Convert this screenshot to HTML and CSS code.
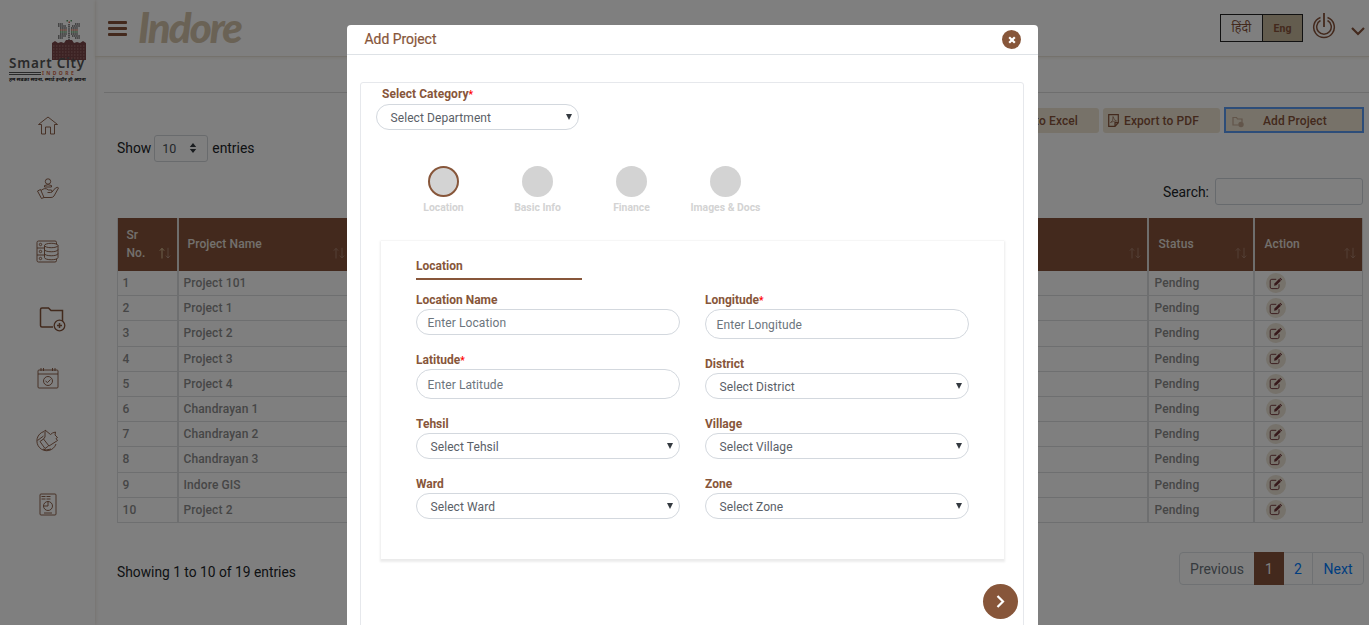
FILE: index.html
```html
<!DOCTYPE html>
<html lang="en">
<head>
<meta charset="utf-8">
<title>Add Project</title>
<link rel="stylesheet" href="styles.css">
</head>
<body>
<svg class="defs" width="0" height="0">
  <symbol id="edit" viewBox="0 0 14 14"><path d="M10.8 7.8v3a1.7 1.7 0 0 1-1.700 1.700H3a1.700 1.700 0 0 1-1.700-1.700V4.200A1.700 1.700 0 0 1 3 2.500h4.800" fill="none" stroke="currentColor" stroke-width="1"/><path d="M5.500 9.500l.4-2.500 5-5 2 2-5 5z" fill="currentColor"/><path d="M11.300 1.600l.8-.8 2 2-.8.8z" fill="currentColor"/></symbol>
  <symbol id="sort" viewBox="0 0 12 12"><path d="M3 11.500V1.500M.8 3.700L3 1.300l2.200 2.400"/><path d="M9 .800v10M6.800 8.600L9 11l2.200-2.400"/></symbol>
  <symbol id="sort-asc" viewBox="0 0 12 12"><path d="M3 11.500V1.500M.8 3.700L3 1.300l2.200 2.400" stroke="#d8c096"/><path d="M9 .800v10M6.800 8.600L9 11l2.200-2.400" opacity=".3"/></symbol>
</svg>
<div class="app">
  <aside class="sidebar">
    <div class="brand">
      <svg class="brand-art" width="36" height="43" viewBox="0 0 36 43">
        <g fill="none" stroke="#666" stroke-width="1.500" stroke-dasharray="1.500 .6">
          <path d="M7 6h5M7 8h8M9 10h7M9 16h7M7 18h8M7 20h5M24 6h5M21 8h8M20 10h7M20 16h7M21 18h8M24 20h5M18 6v16"/>
        </g>
        <g fill="none" stroke-width="1.500" stroke-dasharray="1.500 .6"><path d="M9 12h7M20 12h7" stroke="#c06a50"/><path d="M9 14h7M20 14h7" stroke="#5a9a66"/></g>
        <path d="M15.500 2H17v1.500h-1.500zM19.500 2H21v1.500h-1.500z" fill="#5a9a66"/><path d="M17.500 3.500H19V5h-1.500z" fill="#d06a50"/>
        <path d="M1 25l3-2 3 2 3-1 3 1 2-3h6l2 3 3-1 3 1 3-2 3 2v17H1z" fill="#7a4648"/>
        <g fill="none" stroke="#b58a88" stroke-width=".8" stroke-dasharray="1.500 1.500"><path d="M2 28h32M2 31h32M2 34h32M2 37h32M2 40h32"/></g>
      </svg>
      <div class="brand-name">Smart City</div>
      <div class="brand-sub"><span class="brand-line"></span><span>INDORE</span></div>
      <div class="brand-tag">हम सबका सपना, स्मार्ट इन्दौर हो अपना</div>
    </div>
    <nav class="menu">
      <a><svg width="22" height="22" viewBox="0 0 22 22"><path d="M1.500 9.500L11 2l9.500 7.500H17.500V19H13.500v-7h-5v7h-4V9.500z"/></svg></a>
      <a><svg width="24" height="24" viewBox="0 0 24 24"><circle cx="12" cy="4.500" r="2.700"/><path d="M8.500 10V8.500q3.500-1.500 7 0V10zM1.500 14l3-1.500 3.500 8-2.500 1zM5 13.500q4-3.500 7.500-.5h3q2 2-1 2.500h-3M15.500 15.500l4-4.500q3-1.500 3 0l-4.500 8q-1 1.500-3 1.500H8"/></svg></a>
      <a><svg width="23" height="23" viewBox="0 0 23 23"><rect x="1" y="1" width="19.500" height="21" rx="1.500"/><path d="M1 8h8M1 15h8"/><circle cx="4.500" cy="4.500" r="1.200"/><circle cx="4.500" cy="11.500" r="1.200"/><circle cx="4.500" cy="18.500" r="1.200"/><path class="fill" d="M8.500 5.500v12c0 3 13.500 3 13.500 0v-12"/><ellipse class="fill" cx="15.250" cy="5.500" rx="6.750" ry="2.200"/><path d="M8.500 9.500c0 3 13.500 3 13.500 0M8.500 13.500c0 3 13.500 3 13.500 0"/></svg></a>
      <a class="folder"><svg width="27" height="26" viewBox="0 0 27 26"><path stroke-width="1.500" d="M14 21H3q-1.500 0-1.500-1.500v-16Q1.500 2 3 2h6.500L12 4.500h11.500V15"/><circle cx="20.500" cy="19.500" r="5.300" stroke-width="1.300"/><path stroke-width="1.500" d="M20.500 17v5M18 19.500h5"/></svg></a>
      <a><svg width="22" height="22" viewBox="0 0 22 22"><rect x="1" y="3" width="20" height="18" rx="1"/><path d="M1 7h20M4 1v3M6.500 1v3M15.500 1v3M18 1v3"/><circle cx="11" cy="14" r="4.500"/><path d="M8.500 14l2 1.500 3-3"/></svg></a>
      <a><svg width="23" height="23" viewBox="0 0 23 23"><path d="M8 2.500A9.800 9.800 0 1 0 20 15M1.500 11.500l6-4.500M9 1v7l-1.500 2 5.500 7 8.500-5.500-1.500-2 1.500-1-2.500-2.500.5-3-3 1-2 1.500L9 1M7.500 10L4 12.500l5 7 3.500-2.500M7 20l3 1 5-1"/></svg></a>
      <a class="report"><svg width="18" height="23" viewBox="0 0 18 23"><rect x="1" y="1" width="16" height="21" rx="1"/><circle cx="9" cy="13" r="4.500"/><path d="M9 8.500V13H4.500M5 20h8M2.500 3.500h4M7.500 3.500h4M2.500 6h4M7.500 6h4"/></svg></a>
    </nav>
  </aside>
  <div class="page">
    <header class="topbar">
      <div class="burger"><i></i><i></i><i></i></div>
      <div class="city">Indore</div>
      <div class="lang"><span>हिंदी</span><b>Eng</b></div>
      <svg class="power" width="24" height="28" viewBox="0 0 24 28"><path d="M8.500 5.500A10.300 10.300 0 1 0 15.500 5.500M8.500 8.500A7.300 7.300 0 1 0 15.500 8.500" fill="none" stroke="currentColor" stroke-width="1.500"/><path d="M12 1v14" stroke="currentColor" stroke-width="1.800"/></svg>
      <svg class="chev" width="14" height="9" viewBox="0 0 14 9"><path d="M1 1l6 6 6-6" fill="none" stroke="currentColor" stroke-width="2.200"/></svg>
    </header>
    <main class="content">
      <div class="actions">
        <div class="btn excel">Export to Excel</div>
        <div class="btn pdf"><svg width="11" height="13" viewBox="0 0 11 13"><path d="M.7.700h9.600v8L7 12.300H.7zM10.300 8.700H7v3.600" fill="none" stroke="currentColor" stroke-width="1.200"/><path d="M2.500 8.500q3-1 2.500-6 1 4 3.500 4.500-3 0-6 1.500" fill="none" stroke="currentColor" stroke-width=".6"/></svg>Export to PDF</div>
        <div class="btn add"><svg width="13" height="12" viewBox="0 0 13 12"><path d="M6.500 9H1V1.500h3.500l1 1.500H10v3" fill="none" stroke="currentColor" stroke-width="1.200"/><circle cx="9" cy="8.500" r="2.700" fill="currentColor"/></svg><span>Add Project</span></div>
      </div>
      <div class="length">Show <span class="length-box">10<svg width="8" height="10" viewBox="0 0 8 10"><path d="M4 0l3.200 4H.8zM4 10L.8 6h6.400z" fill="#343a40"/></svg></span> entries</div>
      <div class="search">Search:<span class="search-box"></span></div>
      <table class="grid">
        <colgroup><col class="c1"><col class="c2"><col><col class="c4"><col class="c5"></colgroup>
        <thead><tr>
          <th><div class="th-in">Sr<br>No.<svg class="on"><use href="#sort-asc"/></svg></div></th>
          <th><div class="th-in">Project Name<svg><use href="#sort"/></svg></div></th>
          <th><div class="th-in"><svg><use href="#sort"/></svg></div></th>
          <th><div class="th-in">Status<svg><use href="#sort"/></svg></div></th>
          <th><div class="th-in">Action<svg><use href="#sort"/></svg></div></th>
        </tr></thead>
        <tbody>
          <tr><td>1</td><td>Project 101</td><td></td><td>Pending</td><td><span class="edit"><svg><use href="#edit"/></svg></span></td></tr>
          <tr><td>2</td><td>Project 1</td><td></td><td>Pending</td><td><span class="edit"><svg><use href="#edit"/></svg></span></td></tr>
          <tr><td>3</td><td>Project 2</td><td></td><td>Pending</td><td><span class="edit"><svg><use href="#edit"/></svg></span></td></tr>
          <tr><td>4</td><td>Project 3</td><td></td><td>Pending</td><td><span class="edit"><svg><use href="#edit"/></svg></span></td></tr>
          <tr><td>5</td><td>Project 4</td><td></td><td>Pending</td><td><span class="edit"><svg><use href="#edit"/></svg></span></td></tr>
          <tr><td>6</td><td>Chandrayan 1</td><td></td><td>Pending</td><td><span class="edit"><svg><use href="#edit"/></svg></span></td></tr>
          <tr><td>7</td><td>Chandrayan 2</td><td></td><td>Pending</td><td><span class="edit"><svg><use href="#edit"/></svg></span></td></tr>
          <tr><td>8</td><td>Chandrayan 3</td><td></td><td>Pending</td><td><span class="edit"><svg><use href="#edit"/></svg></span></td></tr>
          <tr><td>9</td><td>Indore GIS</td><td></td><td>Pending</td><td><span class="edit"><svg><use href="#edit"/></svg></span></td></tr>
          <tr><td>10</td><td>Project 2</td><td></td><td>Pending</td><td><span class="edit"><svg><use href="#edit"/></svg></span></td></tr>
        </tbody>
      </table>
      <div class="foot">
        <div class="info">Showing 1 to 10 of 19 entries</div>
        <div class="pager"><span class="prev">Previous</span><span class="cur">1</span><span class="p2">2</span><span class="next">Next</span></div>
      </div>
    </main>
  </div>
</div>
<div class="backdrop">
  <section class="modal">
    <div class="modal-head"><h5>Add Project</h5><span class="close"><svg width="8" height="8" viewBox="0 0 8 8"><path d="M1.200 1.200l5.600 5.600M6.800 1.200L1.200 6.800" stroke="#fff" stroke-width="2.200"/></svg></span></div>
    <div class="card">
      <label class="cat">Select Category<em>*</em></label>
      <div class="field select cat-select">Select Department</div>
      <div class="steps">
        <div class="step active"><i></i>Location</div>
        <div class="step"><i></i>Basic Info</div>
        <div class="step"><i></i>Finance</div>
        <div class="step"><i></i>Images &amp; Docs</div>
      </div>
      <div class="panel">
        <h6>Location</h6>
        <div class="cols">
          <div class="col">
            <label>Location Name</label><div class="field input">Enter Location</div>
            <label>Latitude<em>*</em></label><div class="field input tall">Enter Latitude</div>
            <label>Tehsil</label><div class="field select">Select Tehsil</div>
            <label>Ward</label><div class="field select">Select Ward</div>
          </div>
          <div class="col">
            <label>Longitude<em>*</em></label><div class="field input tall">Enter Longitude</div>
            <label>District</label><div class="field select">Select District</div>
            <label>Village</label><div class="field select">Select Village</div>
            <label>Zone</label><div class="field select">Select Zone</div>
          </div>
        </div>
      </div>
      <div class="go"><svg width="9" height="13" viewBox="0 0 9 13"><path d="M1.500 1l5.500 5.500L1.500 12" fill="none" stroke="#fff" stroke-width="2.200"/></svg></div>
    </div>
  </section>
</div>
</body>
</html>
```
FILE: styles.css
```css
* { box-sizing: border-box; }
html, body { height: 100%; overflow: hidden; }
body { margin: 0; font-family: Roboto, "Noto Sans", sans-serif; color: #212529; background: #fff; }
.defs { position: absolute; }

.app { display: flex; height: 625px; }
.sidebar { width: 95px; flex: none; box-shadow: 0 0 4px rgba(160, 130, 95, .3); }
.brand { height: 94px; padding: 18px 0 0 9px; }
.brand-art { display: block; margin-left: 42px; margin-bottom: -5px; }
.brand-name { position: relative; font: 600 13.500px/15px "Noto Sans", sans-serif; color: #555; letter-spacing: .75px; white-space: nowrap; }
.brand-sub { display: flex; align-items: center; height: 5px; font: bold 5px/5px "Noto Sans", sans-serif; color: #d06a48; letter-spacing: 2.400px; }
.brand-line { width: 32px; height: 3px; margin-right: 1px; border-top: 1px solid #555; border-bottom: 1px solid #555; }
.brand-tag { font: bold 5.100px/7px "Noto Sans", sans-serif; color: #111; white-space: nowrap; }
.menu { display: flex; flex-direction: column; }
.menu a { height: 63px; display: flex; align-items: center; justify-content: center; }
.menu svg { fill: none; stroke: #85543b; stroke-width: .9; }
.menu .fill { fill: #fff; }
.menu .folder { padding: 8px 0 0 9px; }
.menu .report { padding-top: 2px; }

.page { flex: 1; min-width: 0; }
.topbar { display: flex; align-items: flex-start; height: 57px; padding: 0 4px 0 13px; border-bottom: 1px solid #ebe5d9; color: #87533a; box-shadow: 0 1px 3px rgba(190, 170, 130, .2); }
.burger { display: flex; flex-direction: column; gap: 3px; margin-top: 21px; }
.burger i { width: 19px; height: 3px; background: #87533a; border-radius: 1px; }
.city { margin: 3px 0 0 11px; font: italic 900 42px/48px Lato, sans-serif; color: #d4c4aa; letter-spacing: -2px; flex: 1; }
.lang { display: flex; width: 83px; height: 28px; margin-top: 14px; border: 1px solid #222; }
.lang span { width: 41px; font-size: 12.500px; line-height: 25px; text-align: center; }
.lang b { flex: 1; border-left: 1px solid #222; background: #c6b99c; font-size: 10.500px; font-weight: 700; line-height: 27px; text-align: center; }
.power { margin: 12px 0 0 9px; }
.chev { margin: 27px 0 0 15px; }

.content { margin-left: 9px; padding: 0 5px 0 13px; }
.actions { display: flex; justify-content: flex-end; gap: 4px; margin: 35px -5px 0 -13px; padding: 14px 5px 0; border-top: 1px solid #dcdcdc; }
.btn { display: flex; align-items: center; height: 25px; margin-top: 1px; background: #eee5d2; border-radius: 3px; color: #87533a; font-size: 12px; font-weight: 500; letter-spacing: .1px; }
.excel { width: 117px; padding-left: 14.500px; }
.pdf { width: 117px; padding-left: 5px; gap: 5px; }
.add { width: 140px; height: 26px; margin-top: 0; padding-left: 6px; border: 2px solid #5b9bf2; border-radius: 0; }
.add svg { opacity: .4; margin-top: 3px; }
.add span { margin-left: 18px; padding-top: 1px; }
.length { display: flex; align-items: center; height: 27px; margin-top: 1.500px; font-size: 13.900px; line-height: 25px; }
.length-box { display: flex; align-items: center; width: 54px; height: 27px; margin: 0 4px 0 3px; padding: 0 10px 0 7px; border: 1px solid #d3d6da; border-radius: 3px; color: #495057; font-size: 12.500px; justify-content: space-between; }
.search { display: flex; justify-content: flex-end; align-items: center; gap: 6px; height: 27px; margin-top: 16.500px; margin-right: 1px; font-size: 13.900px; }
.search-box { width: 148px; height: 27px; border: 1px solid #ced4da; border-radius: 3px; }

.grid { width: 1246px; margin-top: 13px; table-layout: fixed; border-collapse: separate; border-spacing: 0; border-left: 1px solid #dee0e2; font-size: 12px; }
.c1 { width: 61px; } .c2 { width: 174px; } .c4 { width: 106px; } .c5 { width: 108px; }
.grid th { height: 53px; padding: 0; background: #87533a; border-right: 2px solid #dedcda; color: #e6e0dc; font-size: 12px; font-weight: 500; line-height: 18px; letter-spacing: .1px; text-align: left; }
.th-in { position: relative; display: flex; align-items: center; height: 53px; padding: 0 0 1px 8.500px; white-space: pre-wrap; }
.th-in svg { position: absolute; right: 6px; bottom: 12px; width: 12px; height: 12px; opacity: .25; fill: none; stroke: #fff; stroke-width: 1; }
.th-in svg.on { opacity: 1; }
.grid td { height: 25.200px; padding: 1px 0 0 4.500px; border-right: 2px solid #dddfe1; border-bottom: 1px solid #dddfe1; color: #8d8d8d; font-weight: 500; line-height: 15px; letter-spacing: .12px; vertical-align: middle; }
.grid td:nth-child(4), .grid th:nth-child(4) .th-in { padding-left: 5.500px; }
.grid th:nth-child(4) .th-in, .grid th:nth-child(5) .th-in { padding-left: 9.500px; }
.grid td:last-child { padding-top: 0; }
.grid th:last-child, .grid td:last-child { border-right-width: 1px; }
.edit { display: flex; align-items: center; justify-content: center; width: 20px; height: 20px; margin-left: 6px; border-radius: 50%; background: #ece4d6; color: #6f3236; }
.edit svg { width: 13px; height: 13px; }

.foot { display: flex; justify-content: space-between; margin-top: 29px; font-size: 14px; }
.info { font-size: 13.800px; line-height: 41px; }
.pager { display: flex; height: 33px; line-height: 32px; border: 1px solid #dee2e6; border-radius: 4px; text-align: center; color: #007bff; }
.prev { width: 74px; color: #6c757d; }
.cur { width: 30px; margin: -1px 0; padding-top: 1px; background: #87533a; color: #fff; }
.p2 { width: 29px; border-right: 1px solid #dee2e6; }
.next { width: 50px; }

.backdrop { position: absolute; inset: 0; background: rgba(0, 0, 0, .5); overflow: hidden; }
.modal { width: 691px; height: 640px; margin: 25px 0 0 347px; background: #fff; border-radius: 4px 4px 0 0; }
.modal-head { display: flex; align-items: center; justify-content: space-between; height: 30px; padding: 0 17px 0 17.500px; border-bottom: 1px solid #dee2e6; }
.modal-head h5 { margin: 0 0 1px; color: #87563a; font-size: 13.900px; font-weight: 400; -webkit-text-stroke: .2px #87563a; }
.close { display: flex; align-items: center; justify-content: center; width: 19px; height: 19px; border-radius: 50%; background: #87563a; }
.card { width: 664px; height: 600px; margin: 27px 0 0 13px; padding: 3px 19px 0 15px; border: 1px solid #e6e8ec; border-radius: 3px; background: #fff; }
label { display: block; height: 18px; color: #87563a; font-size: 12px; font-weight: 700; line-height: 19px; }
em { color: #f00; font-style: normal; font-size: 10px; line-height: 10px; }
.cat { padding-left: 6px; line-height: 17px; letter-spacing: .05px; }
.field { position: relative; height: 26px; margin-bottom: 16px; border: 1px solid #d3d8de; border-radius: 15px; color: #5a6067; font-size: 12px; line-height: 27px; }
.select { padding-left: 13.500px; letter-spacing: .08px; }
.select::after { content: ""; position: absolute; right: 6.500px; top: 9px; border: 3px solid transparent; border-top: 6px solid #343a40; border-bottom: 0; }
.input { padding-left: 10.500px; color: #6c757d; letter-spacing: .1px; line-height: 26px; }
.tall { height: 30px; line-height: 30px; }
.cat-select { width: 203px; margin-bottom: 0; }
.steps { display: flex; margin: 36px 0 0 20.500px; }
.step { display: flex; flex-direction: column; align-items: center; width: 94px; color: #d3d3d3; font-size: 10.400px; font-weight: 700; line-height: 15px; white-space: nowrap; }
.step i { width: 31px; height: 31px; margin-bottom: 3px; border-radius: 50%; background: #d3d3d3; }
.step.active i { border: 2px solid #87563a; }
.panel { width: 623px; height: 319px; margin: 25px 0 0 5px; padding: 17px 35px 0; border-top: 1px solid #f6f6f6; box-shadow: 0 2px 2px 1px rgba(0, 0, 0, .08); }
h6 { width: 166px; height: 22px; margin: 0 0 11px; border-bottom: 2px solid #87563a; color: #87563a; font-size: 12px; font-weight: 700; line-height: 16px; }
.cols { display: grid; grid-template-columns: 264px 264px; gap: 25px; }
.go { display: flex; align-items: center; justify-content: center; width: 35px; height: 35px; margin: 25px -14px 0 auto; border-radius: 50%; background: #87563a; }
```
